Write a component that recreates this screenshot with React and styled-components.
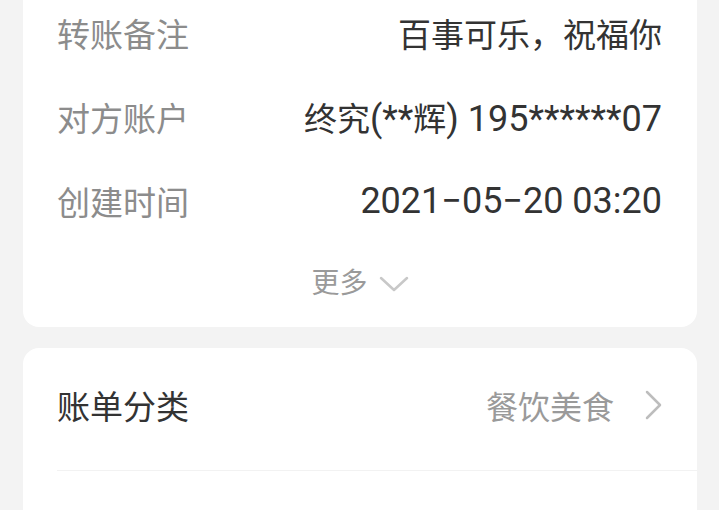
import styled, { createGlobalStyle } from 'styled-components'

const GlobalStyle = createGlobalStyle`
    html, body {
        margin: 0;
        padding: 0;
        background: #f3f3f3;
        font-family: Roboto, "Noto Sans CJK SC", sans-serif;
    }
`

const Pagina = styled.div`
    padding: 0 22px 0 23px;
    display: flex;
    flex-direction: column;
    gap: 21px;
    height: 510px;
    overflow: hidden;
`

const Cartao = styled.section`
    background: #ffffff;
    border-radius: ${props => props.$topo ? '0 0 16px 16px' : '16px 16px 0 0'};
    display: flex;
    flex-direction: column;
    flex: ${props => props.$topo ? '0 0 auto' : '1 0 auto'};
`

/* the first row is cut by the top of the screen, so it keeps only its lower part */
const Linha = styled.div`
    display: flex;
    align-items: center;
    justify-content: space-between;
    box-sizing: border-box;
    height: ${props => props.$cortada ? 75 : 84}px;
    padding: ${props => props.$cortada ? '0 35px 9px 34px' : '0 35px 0 34px'};
`

const Rotulo = styled.span`
    color: #8c8c8c;
    font-size: 33px;
`

const Valor = styled.span`
    color: #333333;
    font-size: 36px;
`

const Han = styled.span`
    font-size: 33px;
`

const MaisLinha = styled.button`
    background: transparent;
    border: none;
    display: flex;
    align-items: center;
    justify-content: center;
    gap: 11px;
    padding: 22px 0 30px;
    height: 84px;
    box-sizing: border-box;
    font-family: inherit;
    color: #9a9a9a;
    font-size: 28px;
`

const SvgBaixo = styled.svg`
    margin-top: 5px;
`

const ItemLinha = styled.div`
    display: flex;
    align-items: center;
    justify-content: space-between;
    height: 123px;
    box-sizing: border-box;
    padding: 0 34px 8px 0;
    margin-left: 34px;
    border-bottom: 1px solid #f2f2f2;
`

const ItemTitulo = styled.span`
    color: #333333;
    font-size: 33px;
`

const ItemDireita = styled.span`
    display: flex;
    align-items: center;
    gap: 31px;
    color: #9a9a9a;
    font-size: 32px;
`

const detalhes = [
    { rotulo: '转账备注', valor: <Han>百事可乐，祝福你</Han>, cortada: true },
    { rotulo: '对方账户', valor: <><Han>终究</Han>(**<Han>辉</Han>) 195******07</> },
    { rotulo: '创建时间', valor: '2021\u221205\u221220 03:20' },
]

function SetaBaixo() {
    return (
        <SvgBaixo width="30" height="16" viewBox="0 0 30 16" fill="none">
            <path d="M2 2 L15 14 L28 2" stroke="#c8c8c8" strokeWidth="2.5" strokeLinecap="round" strokeLinejoin="round" />
        </SvgBaixo>
    )
}

function SetaDireita() {
    return (
        <svg width="18" height="30" viewBox="0 0 18 30" fill="none">
            <path d="M2 2 L15 15 L2 28" stroke="#bdbdbd" strokeWidth="2.5" strokeLinecap="round" strokeLinejoin="round" />
        </svg>
    )
}

export default function App() {
    return (
        <Pagina>
            <GlobalStyle />
            <Cartao $topo>
                {detalhes.map(item => (
                    <Linha key={item.rotulo} $cortada={item.cortada}>
                        <Rotulo>{item.rotulo}</Rotulo>
                        <Valor>{item.valor}</Valor>
                    </Linha>
                ))}
                <MaisLinha>
                    更多
                    <SetaBaixo />
                </MaisLinha>
            </Cartao>
            <Cartao>
                <ItemLinha>
                    <ItemTitulo>账单分类</ItemTitulo>
                    <ItemDireita>
                        餐饮美食
                        <SetaDireita />
                    </ItemDireita>
                </ItemLinha>
            </Cartao>
        </Pagina>
    )
}
